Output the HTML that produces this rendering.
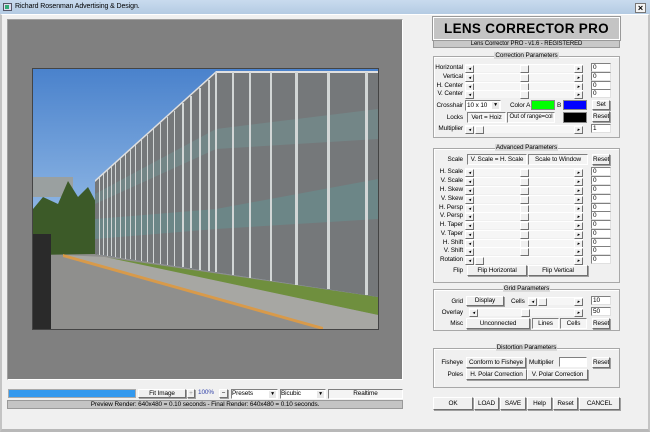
<!DOCTYPE html>
<html><head><meta charset="utf-8"><style>
*{margin:0;padding:0;box-sizing:border-box}
body{width:650px;height:432px;overflow:hidden;background:#f0f0f0;font-family:"Liberation Sans",sans-serif;font-size:6.4px;letter-spacing:-0.1px;color:#000;position:relative}
.a{position:absolute}
.tb{left:0;top:0;width:650px;height:14px;background:linear-gradient(#c9dbee,#b4cbe3);}
.frame{left:0;top:14px;width:650px;height:418px;border:2px solid #c4c4c4;border-top:1px solid #fff;border-bottom:3px solid #b8b8b8}
.l{position:absolute;text-align:right;line-height:8px;white-space:nowrap}
.sb{position:absolute;height:8px;background:#f6f6f6;border-top:1px solid #fff}
.sb .ar{position:absolute;top:0;width:9px;height:8px;background:#f0f0f0;border:1px solid;border-color:#fff #707070 #707070 #fff;font-size:5px;line-height:6px;text-align:center}
.sb .th{position:absolute;top:0;width:9px;height:8px;background:#f0f0f0;border:1px solid;border-color:#fff #707070 #707070 #fff}
.v{position:absolute;width:20px;height:9px;background:#fff;border:1px solid;border-color:#808080 #e0e0e0 #e0e0e0 #808080;line-height:7px;padding-left:1px}
.b{position:absolute;background:#f0f0f0;border:1px solid;border-color:#fff #707070 #707070 #fff;text-align:center;white-space:nowrap;box-shadow:1px 1px 0 #a0a0a0;overflow:hidden}
.s{position:absolute;background:#f4f4f4;border:1px solid;border-color:#808080 #fff #fff #808080;text-align:center;white-space:nowrap;overflow:hidden}
.gb{position:absolute;border:1px solid #a8a8a8;box-shadow:1px 1px 0 #fff inset}
.gt{position:absolute;top:-5px;left:0;right:0;text-align:center}
.gt span{background:#dadada;padding:0 1px;line-height:8px}
.img{left:32px;top:68px;width:347px;height:262px;border:1px solid #444;overflow:hidden;background:linear-gradient(#4a82cc,#9fc3ea 70%)}
.img > div{position:absolute}
.img > i{position:absolute;display:block;background:#d2d6d6}
</style></head><body>
<div class="a tb"></div>
<div class="a" style="left:3px;top:3px;width:9px;height:8px;border:1px solid #556;background:#dde"><div style="margin:1px;width:4px;height:4px;background:#3a7"></div></div>
<div class="l" style="left:15px;top:3px;font-size:7px;text-align:left">Richard Rosenman Advertising &amp; Design.</div>
<div class="a" style="left:635px;top:3px;width:11px;height:10px;background:#f4f4f4;border:1px solid #777;font-size:9px;line-height:8px;text-align:center;font-weight:bold">×</div>
<div class="a frame"></div>

<div class="a" style="left:7px;top:19px;width:396px;height:361px;border:1px solid;border-color:#a0a0a0 #fff #fff #a0a0a0;background:#808080"></div>
<div class="a img">
<div style="left:0;top:108px;width:40px;height:20px;background:#9aa0a0"></div>
<div style="left:0;top:110px;width:64px;height:80px;background:#3c5a28;clip-path:polygon(0 30px,10px 18px,25px 25px,35px 2px,45px 18px,55px 8px,64px 25px,64px 80px,0 80px)"></div>
<div style="left:0;top:0;width:345px;height:260px;background:#8f8f8d;clip-path:polygon(0 186px,62px 185px,345px 228px,345px 260px,0 260px)"></div>
<div style="left:0;top:0;width:345px;height:260px;background:#6f8f3e;clip-path:polygon(70px 188px,345px 228px,345px 246px)"></div>
<div style="left:0;top:0;width:345px;height:260px;background:#a7a7a3;clip-path:polygon(30px 186px,72px 188px,345px 246px,345px 260px,290px 260px)"></div>
<div style="left:0;top:0;width:345px;height:260px;background:#d89a4a;clip-path:polygon(30px 185px,290px 258px,290px 261px,30px 188px)"></div>
<div style="left:0;top:165px;width:18px;height:95px;background:#2a2a2a"></div>
<div style="left:0;top:0;width:345px;height:260px;background:#75787a;clip-path:polygon(62px 112px,183px 3px,345px 3px,345px 228px,62px 185px)"></div>
<div style="left:0;top:0;width:345px;height:260px;background:#5f9a9c;opacity:.4;clip-path:polygon(62px 150px,183px 140px,345px 110px,345px 150px,183px 160px,62px 170px)"></div>
<div style="left:0;top:0;width:345px;height:260px;background:#6fa0a0;opacity:.35;clip-path:polygon(62px 125px,183px 60px,345px 40px,345px 70px,183px 80px,62px 135px)"></div>
<div style="left:0;top:0;width:345px;height:260px;background:#e0e0e0;clip-path:polygon(62px 111px,183px 2px,345px 2px,345px 4px,183px 4px,62px 113px)"></div>
<i style="left:66px;top:108px;width:1px;height:78px"></i>
<i style="left:70px;top:105px;width:1px;height:81px"></i>
<i style="left:74px;top:101px;width:1px;height:86px"></i>
<i style="left:78px;top:98px;width:1px;height:89px"></i>
<i style="left:82px;top:94px;width:1px;height:94px"></i>
<i style="left:87px;top:90px;width:1px;height:99px"></i>
<i style="left:92px;top:85px;width:1px;height:105px"></i>
<i style="left:97px;top:81px;width:1px;height:109px"></i>
<i style="left:102px;top:76px;width:1px;height:115px"></i>
<i style="left:108px;top:71px;width:1px;height:121px"></i>
<i style="left:114px;top:66px;width:1px;height:127px"></i>
<i style="left:120px;top:60px;width:1px;height:134px"></i>
<i style="left:127px;top:54px;width:1px;height:141px"></i>
<i style="left:134px;top:48px;width:1px;height:148px"></i>
<i style="left:141px;top:42px;width:1px;height:155px"></i>
<i style="left:149px;top:34px;width:2px;height:164px"></i>
<i style="left:157px;top:27px;width:2px;height:172px"></i>
<i style="left:166px;top:19px;width:2px;height:182px"></i>
<i style="left:175px;top:11px;width:2px;height:191px"></i>
<i style="left:182px;top:3px;width:2px;height:200px"></i>
<i style="left:199px;top:3px;width:2px;height:203px"></i>
<i style="left:216px;top:3px;width:2px;height:206px"></i>
<i style="left:237px;top:3px;width:2px;height:209px"></i>
<i style="left:262px;top:3px;width:3px;height:213px"></i>
<i style="left:294px;top:3px;width:3px;height:217px"></i>
<i style="left:332px;top:3px;width:3px;height:223px"></i>
</div>

<div class="a" style="left:8px;top:389px;width:128px;height:9px;background:#3399ee;border:1px solid #aaa"></div>
<div class="b" style="left:138px;top:389px;width:48px;height:9px;line-height:7px">Fit Image</div>
<div class="b" style="left:187px;top:389px;width:8px;height:9px;line-height:7px;color:#999">+</div>
<div class="l" style="left:198px;top:389px;color:#3344aa;text-align:left">100%</div>
<div class="b" style="left:219px;top:389px;width:9px;height:9px;line-height:7px">−</div>
<div class="s" style="left:231px;top:389px;width:47px;height:10px;background:#fff;text-align:left;line-height:8px">Presets<span style="position:absolute;right:1px;top:1px;width:7px;height:7px;background:#e8e8e8;font-size:5px;line-height:7px;text-align:center">▼</span></div>
<div class="s" style="left:280px;top:389px;width:46px;height:10px;background:#fff;text-align:left;line-height:8px">Bicubic<span style="position:absolute;right:1px;top:1px;width:7px;height:7px;background:#e8e8e8;font-size:5px;line-height:7px;text-align:center">▼</span></div>
<div class="s" style="left:328px;top:389px;width:75px;height:10px;line-height:8px">Realtime</div>
<div class="a" style="left:7px;top:400px;width:396px;height:9px;background:#c4c4c4;border:1px solid #999;text-align:center;line-height:7px">Preview Render: 640x480 = 0.10 seconds - Final Render: 640x480 = 0.10 seconds.</div>

<div class="a" style="left:433px;top:17px;width:187px;height:23px;background:#c4c4c4;border:1px solid #fff;box-shadow:0 0 0 1px #999;text-align:center;font-weight:bold;font-size:13.5px;line-height:22px;letter-spacing:.3px">LENS CORRECTOR PRO</div>
<div class="a" style="left:433px;top:40px;width:187px;height:8px;background:#c8c8c8;border:1px solid #999;text-align:center;line-height:6px;font-size:6px">Lens Corrector PRO - v1.6 - REGISTERED</div>

<div class="gb" style="left:433px;top:56px;width:187px;height:82px"><div class="gt"><span>Correction Parameters</span></div></div>
<div class="l" style="left:433px;top:64px;width:30px">Horizontal</div>
<div class="l" style="left:433px;top:73px;width:30px">Vertical</div>
<div class="l" style="left:433px;top:82px;width:30px">H. Center</div>
<div class="l" style="left:433px;top:90px;width:30px">V. Center</div>
<div class="l" style="left:433px;top:125px;width:30px">Multiplier</div>

<div class="sb" style="left:465px;top:64px;width:118px"><i class="ar" style="left:0">◂</i><i class="th" style="left:55px"></i><i class="ar" style="right:0">▸</i></div>
<div class="sb" style="left:465px;top:73px;width:118px"><i class="ar" style="left:0">◂</i><i class="th" style="left:55px"></i><i class="ar" style="right:0">▸</i></div>
<div class="sb" style="left:465px;top:82px;width:118px"><i class="ar" style="left:0">◂</i><i class="th" style="left:55px"></i><i class="ar" style="right:0">▸</i></div>
<div class="sb" style="left:465px;top:90px;width:118px"><i class="ar" style="left:0">◂</i><i class="th" style="left:55px"></i><i class="ar" style="right:0">▸</i></div>
<div class="sb" style="left:465px;top:125px;width:118px"><i class="ar" style="left:0">◂</i><i class="th" style="left:10px"></i><i class="ar" style="right:0">▸</i></div>
<div class="v" style="left:591px;top:63px">0</div>
<div class="v" style="left:591px;top:72px">0</div>
<div class="v" style="left:591px;top:81px">0</div>
<div class="v" style="left:591px;top:89px">0</div>
<div class="v" style="left:591px;top:124px">1</div>

<div class="l" style="left:433px;top:102px;width:30px">Crosshair</div>
<div class="s" style="left:465px;top:100px;width:36px;height:11px;background:#fff;text-align:left;line-height:9px;padding-left:1px">10 x 10<span style="position:absolute;right:1px;top:1px;width:7px;height:7px;background:#e8e8e8;font-size:5px;line-height:7px;text-align:center">▼</span></div>
<div class="l" style="left:510px;top:102px">Color A</div>
<div class="a" style="left:531px;top:100px;width:24px;height:10px;background:#00ff00;border:1px solid #888"></div>
<div class="l" style="left:557px;top:102px">B</div>
<div class="a" style="left:563px;top:100px;width:24px;height:10px;background:#0000ff;border:1px solid #888"></div>
<div class="b" style="left:592px;top:100px;width:18px;height:10px;line-height:8px">Set</div>
<div class="l" style="left:433px;top:114px;width:30px">Locks</div>
<div class="s" style="left:467px;top:112px;width:39px;height:11px;line-height:9px">Vert = Hoiz</div>
<div class="s" style="left:507px;top:112px;width:48px;height:11px;line-height:9px;font-size:6px">Out of range=col</div>
<div class="a" style="left:563px;top:112px;width:24px;height:11px;background:#000;border:1px solid #888"></div>
<div class="b" style="left:592px;top:111px;width:18px;height:11px;line-height:9px">Reset</div>

<div class="gb" style="left:433px;top:148px;width:187px;height:135px"><div class="gt"><span>Advanced Parameters</span></div></div>
<div class="l" style="left:433px;top:156px;width:30px">Scale</div>
<div class="s" style="left:467px;top:154px;width:60px;height:11px;line-height:9px">V. Scale = H. Scale</div>
<div class="s" style="left:528px;top:154px;width:60px;height:11px;line-height:9px">Scale to Window</div>
<div class="b" style="left:592px;top:154px;width:18px;height:11px;line-height:9px">Reset</div>

<div class="l" style="left:433px;top:168px;width:30px">H. Scale</div>
<div class="l" style="left:433px;top:177px;width:30px">V. Scale</div>
<div class="l" style="left:433px;top:186px;width:30px">H. Skew</div>
<div class="l" style="left:433px;top:195px;width:30px">V. Skew</div>
<div class="l" style="left:433px;top:204px;width:30px">H. Persp</div>
<div class="l" style="left:433px;top:212px;width:30px">V. Persp</div>
<div class="l" style="left:433px;top:221px;width:30px">H. Taper</div>
<div class="l" style="left:433px;top:230px;width:30px">V. Taper</div>
<div class="l" style="left:433px;top:239px;width:30px">H. Shift</div>
<div class="l" style="left:433px;top:247px;width:30px">V. Shift</div>
<div class="l" style="left:433px;top:256px;width:30px">Rotation</div>

<div class="sb" style="left:465px;top:168px;width:118px"><i class="ar" style="left:0">◂</i><i class="th" style="left:55px"></i><i class="ar" style="right:0">▸</i></div>
<div class="sb" style="left:465px;top:177px;width:118px"><i class="ar" style="left:0">◂</i><i class="th" style="left:55px"></i><i class="ar" style="right:0">▸</i></div>
<div class="sb" style="left:465px;top:186px;width:118px"><i class="ar" style="left:0">◂</i><i class="th" style="left:55px"></i><i class="ar" style="right:0">▸</i></div>
<div class="sb" style="left:465px;top:195px;width:118px"><i class="ar" style="left:0">◂</i><i class="th" style="left:55px"></i><i class="ar" style="right:0">▸</i></div>
<div class="sb" style="left:465px;top:204px;width:118px"><i class="ar" style="left:0">◂</i><i class="th" style="left:55px"></i><i class="ar" style="right:0">▸</i></div>
<div class="sb" style="left:465px;top:212px;width:118px"><i class="ar" style="left:0">◂</i><i class="th" style="left:55px"></i><i class="ar" style="right:0">▸</i></div>
<div class="sb" style="left:465px;top:221px;width:118px"><i class="ar" style="left:0">◂</i><i class="th" style="left:55px"></i><i class="ar" style="right:0">▸</i></div>
<div class="sb" style="left:465px;top:230px;width:118px"><i class="ar" style="left:0">◂</i><i class="th" style="left:55px"></i><i class="ar" style="right:0">▸</i></div>
<div class="sb" style="left:465px;top:239px;width:118px"><i class="ar" style="left:0">◂</i><i class="th" style="left:55px"></i><i class="ar" style="right:0">▸</i></div>
<div class="sb" style="left:465px;top:247px;width:118px"><i class="ar" style="left:0">◂</i><i class="th" style="left:55px"></i><i class="ar" style="right:0">▸</i></div>
<div class="sb" style="left:465px;top:256px;width:118px"><i class="ar" style="left:0">◂</i><i class="th" style="left:10px"></i><i class="ar" style="right:0">▸</i></div>
<div class="v" style="left:591px;top:167px">0</div>
<div class="v" style="left:591px;top:176px">0</div>
<div class="v" style="left:591px;top:185px">0</div>
<div class="v" style="left:591px;top:194px">0</div>
<div class="v" style="left:591px;top:203px">0</div>
<div class="v" style="left:591px;top:211px">0</div>
<div class="v" style="left:591px;top:220px">0</div>
<div class="v" style="left:591px;top:229px">0</div>
<div class="v" style="left:591px;top:238px">0</div>
<div class="v" style="left:591px;top:246px">0</div>
<div class="v" style="left:591px;top:255px">0</div>
<div class="l" style="left:433px;top:267px;width:30px">Flip</div>
<div class="b" style="left:467px;top:265px;width:60px;height:11px;line-height:9px">Flip Horizontal</div>
<div class="b" style="left:528px;top:265px;width:60px;height:11px;line-height:9px">Flip Vertical</div>

<div class="gb" style="left:433px;top:289px;width:187px;height:42px"><div class="gt"><span>Grid Parameters</span></div></div>
<div class="l" style="left:433px;top:298px;width:30px">Grid</div>
<div class="b" style="left:466px;top:296px;width:38px;height:10px;line-height:8px">Display</div>
<div class="l" style="left:511px;top:298px">Cells</div>
<div class="sb" style="left:528px;top:297px;width:55px"><i class="ar" style="left:0">◂</i><i class="th" style="left:10px"></i><i class="ar" style="right:0">▸</i></div>
<div class="v" style="left:591px;top:296px">10</div>
<div class="l" style="left:433px;top:309px;width:30px">Overlay</div>
<div class="sb" style="left:469px;top:308px;width:114px"><i class="ar" style="left:0">◂</i><i class="th" style="left:52px"></i><i class="ar" style="right:0">▸</i></div>
<div class="v" style="left:591px;top:307px">50</div>
<div class="l" style="left:433px;top:320px;width:30px">Misc</div>
<div class="b" style="left:466px;top:318px;width:64px;height:11px;line-height:9px">Unconnected</div>
<div class="s" style="left:532px;top:318px;width:27px;height:11px;line-height:9px">Lines</div>
<div class="s" style="left:560px;top:318px;width:27px;height:11px;line-height:9px">Cells</div>
<div class="b" style="left:592px;top:318px;width:18px;height:11px;line-height:9px">Reset</div>

<div class="gb" style="left:433px;top:348px;width:187px;height:40px"><div class="gt"><span>Distortion Parameters</span></div></div>
<div class="l" style="left:433px;top:359px;width:30px">Fisheye</div>
<div class="b" style="left:466px;top:357px;width:60px;height:11px;line-height:9px">Conform to Fisheye</div>
<div class="l" style="left:529px;top:359px">Multiplier</div>
<div class="s" style="left:559px;top:357px;width:28px;height:10px;background:#fff"></div>
<div class="b" style="left:592px;top:357px;width:18px;height:11px;line-height:9px">Reset</div>
<div class="l" style="left:433px;top:371px;width:30px">Poles</div>
<div class="b" style="left:466px;top:369px;width:61px;height:11px;line-height:9px">H. Polar Correction</div>
<div class="b" style="left:527px;top:369px;width:61px;height:11px;line-height:9px">V. Polar Correction</div>

<div class="b" style="left:433px;top:397px;width:40px;height:13px;line-height:11px">OK</div>
<div class="b" style="left:474px;top:397px;width:25px;height:13px;line-height:11px">LOAD</div>
<div class="b" style="left:500px;top:397px;width:26px;height:13px;line-height:11px">SAVE</div>
<div class="b" style="left:527px;top:397px;width:25px;height:13px;line-height:11px">Help</div>
<div class="b" style="left:553px;top:397px;width:25px;height:13px;line-height:11px">Reset</div>
<div class="b" style="left:579px;top:397px;width:41px;height:13px;line-height:11px">CANCEL</div>
</body></html>
